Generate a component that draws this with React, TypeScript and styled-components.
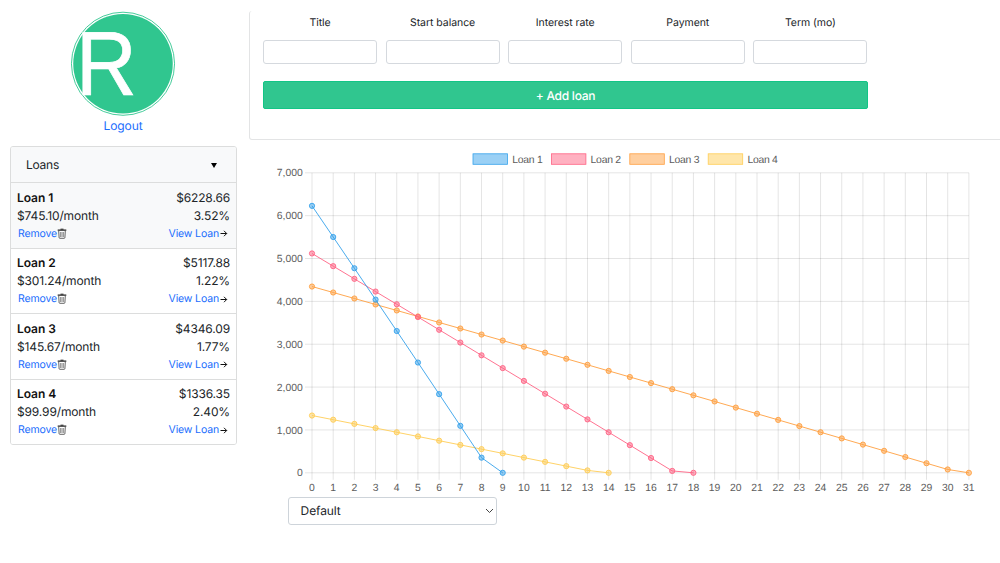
import React from "react";
import styled, { createGlobalStyle } from "styled-components";

const GlobalStyle = createGlobalStyle`
  *, *::before, *::after { box-sizing: border-box; }
  body {
    margin: 0;
    background: #fff;
    color: #212529;
    font-family: Inter, "Liberation Sans", sans-serif;
    text-rendering: geometricPrecision;
    overflow: hidden;
  }
`;

const Page = styled.div`
  display: grid;
  grid-template-columns: 249px 1fr;
  width: 1000px;
  height: 563px;
  padding-top: 11px;
  overflow: hidden;
`;

const Sidebar = styled.aside`
  display: flex;
  flex-direction: column;
  padding-left: 10px;
  width: 237px;
`;

const Brand = styled.div`
  display: flex;
  flex-direction: column;
  align-items: center;
  height: 135px;
  padding-right: 1px;
`;

const Logo = styled.svg`
  display: block;
  width: 106px;
  height: 105.5px;
`;

const Logout = styled.a`
  color: #1a6dfd;
  font-size: 12px;
  line-height: 17px;
  letter-spacing: -0.1px;
`;

const LoanPanel = styled.section`
  border: 1px solid #dcdddd;
  border-radius: 3px;
  overflow: hidden;
  height: 298.5px;
`;

const PanelHeader = styled.header`
  display: flex;
  align-items: center;
  justify-content: space-between;
  height: 35px;
  padding: 0 19px 0 15px;
  background: #f8f9fa;
  font-size: 12px;
  letter-spacing: -0.25px;
`;

const Caret = styled.span`
  width: 0;
  height: 0;
  margin-top: 2px;
  border: 3.5px solid transparent;
  border-top: 5px solid #000;
  border-bottom: 0;
`;

const LoanCard = styled.article<{ $active?: boolean }>`
  height: 65.5px;
  padding: 5.5px 6px 0;
  border-top: 1px solid #dcdddd;
  background: ${(p) => (p.$active ? "#f8f9fa" : "#fff")};
`;

const LoanLine = styled.div`
  display: flex;
  justify-content: space-between;
  height: 18px;
  line-height: 18px;
  font-size: 12px;
  letter-spacing: -0.14px;
`;

const LoanName = styled.strong`
  font-weight: 600;
  color: #111;
  letter-spacing: -0.05px;
`;

const Actions = styled(LoanLine)`
  height: 17px;
  line-height: 17px;
  font-size: 10.5px;
  padding: 0 1px 0 1px;
`;

const Action = styled.a`
  display: flex;
  align-items: center;
  color: #1a6dfd;
`;

const Main = styled.main`
  display: flex;
  flex-direction: column;
  min-width: 0;
`;

const LoanForm = styled.form`
  width: 760px;
  height: 128.5px;
  padding: 0 0 0 13px;
  border: 1px solid #e3e4e5;
  border-top: 0;
  border-radius: 3px;
`;

const Fields = styled.div`
  display: grid;
  grid-template-columns: repeat(5, 114px);
  column-gap: 8.6px;
`;

const Field = styled.label`
  display: flex;
  flex-direction: column;
  align-items: center;
  font-size: 10.5px;
  line-height: 23px;
  letter-spacing: -0.05px;
`;

const Input = styled.input`
  width: 100%;
  height: 24px;
  margin-top: 6px;
  border: 1px solid #d5d9de;
  border-radius: 3px;
  background: #fff;
`;

const AddButton = styled.button`
  display: block;
  width: 605px;
  height: 28px;
  margin-top: 17.4px;
  padding: 0;
  border: 1px solid #12c586;
  border-radius: 2px;
  background: #30c68f;
  color: #fff;
  font: 500 12px Inter, sans-serif;
  letter-spacing: -0.25px;
  text-rendering: geometricPrecision;
`;

const Chart = styled.svg`
  display: block;
  width: 751px;
  height: 357px;
  font-family: "Liberation Sans", Arial, sans-serif;
  font-size: 10.4px;
  fill: #5c5c5c;
`;

const SelectBox = styled.div`
  display: flex;
  align-items: center;
  justify-content: space-between;
  width: 209px;
  height: 28.5px;
  margin-left: 38.6px;
  padding: 0 2px 0 12px;
  border: 1px solid #ced4da;
  border-radius: 3px;
  font-size: 12px;
  letter-spacing: -0.1px;
`;

type Loan = {
  name: string;
  balance: number;
  payment: number;
  rate: number;
  color: string;
};

const loans: Loan[] = [
  { name: "Loan 1", balance: 6228.66, payment: 745.1, rate: 3.52, color: "54,162,235" },
  { name: "Loan 2", balance: 5117.88, payment: 301.24, rate: 1.22, color: "255,99,132" },
  { name: "Loan 3", balance: 4346.09, payment: 145.67, rate: 1.77, color: "255,159,64" },
  { name: "Loan 4", balance: 1336.35, payment: 99.99, rate: 2.4, color: "255,205,86" },
];

const fieldNames = ["Title", "Start balance", "Interest rate", "Payment", "Term (mo)"];

const schedule = (loan: Loan): number[] => {
  const values = [loan.balance];
  let left = loan.balance;
  while (left > 0) {
    left = Math.max(0, left * (1 + loan.rate / 1200) - loan.payment);
    values.push(left);
  }
  return values;
};

const LEFT = 63;
const BOTTOM = 332.8;
const TOP = 32.8;
const STEP = 21.19;
const MONTHS = 31;
const px = (month: number) => LEFT + month * STEP;
const py = (value: number) => BOTTOM - (value / 7000) * (BOTTOM - TOP);

const TrashIcon = () => (
  <svg width="10" height="11" viewBox="0 0 10 11" fill="none" stroke="#222">
    <path d="M3.5 1.2h3" strokeWidth="1" />
    <path d="M.7 2.1h8.6" strokeWidth="1.4" />
    <path d="M1.7 3l.4 6.6q.1.7.8.7h4.2q.7 0 .8-.7L8.3 3" strokeWidth=".7" />
    <path d="M3.6 4v5M5 4v5M6.4 4v5" strokeWidth=".5" />
  </svg>
);

const ArrowIcon = () => (
  <svg width="10" height="10" viewBox="0 0 10 10" fill="none" stroke="#111" strokeWidth="1">
    <path d="M1.5 5.5h6.2M5 2.8l2.7 2.7L5 8.2" />
  </svg>
);

const BrandLogo = () => (
  <Logo viewBox="0 0 106 106">
    <circle cx="53" cy="53" r="51.8" fill="#fff" stroke="#30c68f" strokeWidth=".9" />
    <circle cx="53" cy="53" r="50" fill="#30c68f" />
    <text x="5.8" y="84.6" fill="#fff" stroke="#fff" strokeWidth=".7" fontFamily="Liberation Sans, sans-serif" fontSize="91.5" textLength="61" lengthAdjust="spacingAndGlyphs">
      R
    </text>
  </Logo>
);

const BalanceChart = () => (
  <Chart viewBox="0 0 751 357">
    {loans.map((loan, i) => (
      <g key={loan.name}>
        <rect x={224 + i * 78.4} y={13.8} width={34.5} height={10.5} fill={`rgba(${loan.color},.5)`} stroke={`rgb(${loan.color})`} strokeWidth=".8" />
        <text x={263.2 + i * 78.4} y={22.5} textLength="30.5">{loan.name}</text>
      </g>
    ))}
    <g stroke="rgba(0,0,0,.12)" strokeWidth=".9">
      {Array.from({ length: 8 }, (_, i) => (
        <line key={i} x1={LEFT - 7} x2={px(MONTHS)} y1={py(i * 1000)} y2={py(i * 1000)} />
      ))}
      {Array.from({ length: MONTHS + 1 }, (_, i) => (
        <line key={i} x1={px(i)} x2={px(i)} y1={TOP} y2={BOTTOM + 7} />
      ))}
    </g>
    <g textAnchor="end">
      {Array.from({ length: 8 }, (_, i) => (
        <text key={i} x={LEFT - 9.2} y={py(i * 1000) + 3.6}>{(i * 1000).toLocaleString("en-US")}</text>
      ))}
    </g>
    <g textAnchor="middle">
      {Array.from({ length: MONTHS + 1 }, (_, i) => (
        <text key={i} x={px(i)} y={351.4}>{i}</text>
      ))}
    </g>
    {[...loans].reverse().map((loan) => {
      const values = schedule(loan);
      return (
        <g key={loan.name} stroke={`rgb(${loan.color})`} strokeWidth=".9">
          <polyline fill="none" points={values.map((v, i) => `${px(i)},${py(v)}`).join(" ")} />
          {values.map((v, i) => (
            <circle key={i} cx={px(i)} cy={py(v)} r="2.6" fill={`rgba(${loan.color},.5)`} />
          ))}
        </g>
      );
    })}
  </Chart>
);

export default function App() {
  return (
    <>
      <GlobalStyle />
      <Page>
        <Sidebar>
          <Brand>
            <BrandLogo />
            <Logout>Logout</Logout>
          </Brand>
          <LoanPanel>
            <PanelHeader>
              Loans
              <Caret />
            </PanelHeader>
            {loans.map((loan, i) => (
              <LoanCard key={loan.name} $active={i === 0}>
                <LoanLine>
                  <LoanName>{loan.name}</LoanName>
                  <span>${loan.balance.toFixed(2)}</span>
                </LoanLine>
                <LoanLine>
                  <span>${loan.payment.toFixed(2)}/month</span>
                  <span>{loan.rate.toFixed(2)}%</span>
                </LoanLine>
                <Actions>
                  <Action>Remove<TrashIcon /></Action>
                  <Action>View Loan<ArrowIcon /></Action>
                </Actions>
              </LoanCard>
            ))}
          </LoanPanel>
        </Sidebar>
        <Main>
          <LoanForm>
            <Fields>
              {fieldNames.map((name) => (
                <Field key={name}>
                  {name}
                  <Input />
                </Field>
              ))}
            </Fields>
            <AddButton type="button">+ Add loan</AddButton>
          </LoanForm>
          <BalanceChart />
          <SelectBox>
            Default
            <svg width="9" height="6" viewBox="0 0 9 6" fill="none" stroke="#444" strokeWidth="1">
              <path d="M1 1l3.5 3.5L8 1" />
            </svg>
          </SelectBox>
        </Main>
      </Page>
    </>
  );
}
